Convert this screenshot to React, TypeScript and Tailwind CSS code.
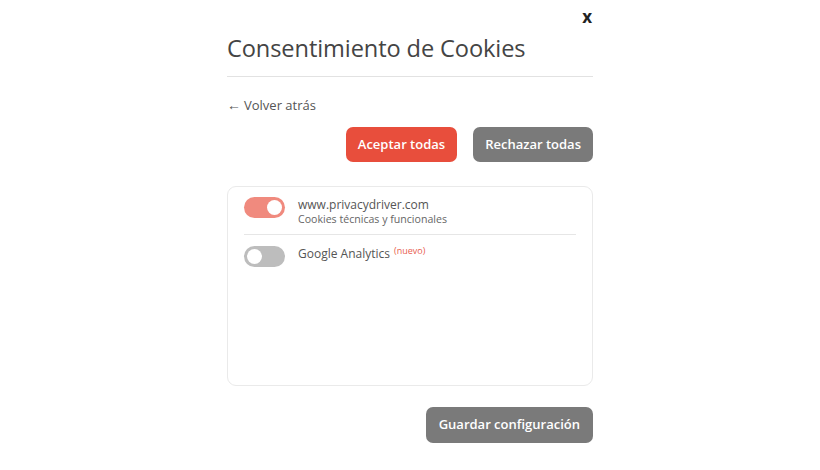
import { useState } from 'react';

const font = { fontFamily: '"Open Sans", "Noto Sans", sans-serif' };

function Toggle({ on, onClick }: { on: boolean; onClick: () => void }) {
  return (
    <button
      onClick={onClick}
      className={`relative w-[41px] h-[21px] rounded-full shrink-0 transition-colors ${on ? 'bg-[#f08a7e]' : 'bg-[#bdbdbd]'}`}
    >
      <span
        className={`absolute top-[3px] w-[15px] h-[15px] rounded-full bg-white transition-all ${on ? 'left-[23px]' : 'left-[3px]'}`}
      />
    </button>
  );
}

export default function App() {
  const [site, setSite] = useState(true);
  const [ga, setGa] = useState(false);

  return (
    <div className="w-[820px] h-[470px] bg-white text-[#444]" style={font}>
      <div className="w-[366px] ml-[227px] pt-[6px]">
        {/* cabecera */}
        <div className="flex justify-end h-[22px]">
          <button className="text-[17px] font-bold text-[#222] mr-[1px] leading-[22px]">x</button>
        </div>
        <h1 className="text-[23.6px] leading-[40px] text-[#444] tracking-[-0.1px]">Consentimiento de Cookies</h1>
        <div className="h-px bg-[#e2e2e2] mt-[8px]" />

        <button className="mt-[18px] text-[13px] text-[#555] leading-[20px]">
          <span className="text-[14px] mr-[3px]">←</span>Volver atrás
        </button>

        <div className="flex justify-end gap-[16px] mt-[11px]">
          <button className="h-[35px] px-[12px] rounded-[7px] bg-[#e84e3c] text-white text-[13px] font-semibold">
            Aceptar todas
          </button>
          <button className="h-[35px] px-[12px] rounded-[7px] bg-[#7a7a7a] text-white text-[13px] font-semibold">
            Rechazar todas
          </button>
        </div>

        {/* lista de cookies */}
        <div className="mt-[24px] h-[200px] border border-[#eaeaea] rounded-[9px] px-[16px] pt-[9px]">
          <div className="flex items-start gap-[13px] pb-[8px] border-b border-[#e6e6e6]">
            <div className="pt-[1px]">
              <Toggle on={site} onClick={() => setSite(!site)} />
            </div>
            <div className="pt-[1px]">
              <div className="text-[12px] text-[#555] leading-[16px]">www.privacydriver.com</div>
              <div className="text-[10.6px] text-[#666] leading-[13px]">Cookies técnicas y funcionales</div>
            </div>
          </div>
          <div className="flex items-start gap-[13px] pt-[11px]">
            <Toggle on={ga} onClick={() => setGa(!ga)} />
            <div className="text-[12px] text-[#555] leading-[14px] pt-[1px]">
              Google Analytics <sup className="text-[9px] text-[#e8604f] ml-[1px]">(nuevo)</sup>
            </div>
          </div>
        </div>

        <div className="flex justify-end mt-[21px]">
          <button className="h-[36px] px-[13px] rounded-[7px] bg-[#7a7a7a] text-white text-[13px] font-semibold">
            Guardar configuración
          </button>
        </div>
      </div>
    </div>
  );
}
